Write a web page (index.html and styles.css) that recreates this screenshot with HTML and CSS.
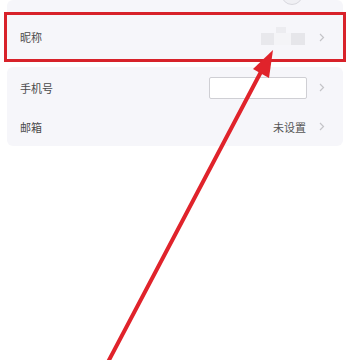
FILE: index.html
```html
<!DOCTYPE html>
<html lang="zh">
<head>
<meta charset="utf-8">
<link rel="stylesheet" href="styles.css">
</head>
<body>
<div class="page">
  <div class="card">
    <div class="avatar-row"><div class="avatar"></div></div>
    <div class="row">
      <span class="label">昵称</span>
      <span class="right">
        <svg class="mosaic" width="44" height="18" viewBox="0 0 44 18">
          <rect x="0" y="6" width="13" height="12" fill="#e8e8ec"/>
          <rect x="15" y="0" width="10" height="6" fill="#ececf0"/>
          <rect x="13" y="6" width="17" height="12" fill="#f4f4f7"/>
          <rect x="30" y="6" width="14" height="12" fill="#e6e6ea"/>
        </svg>
        <svg class="chev" width="6" height="9" viewBox="0 0 6 9"><path d="M1 1 L4.5 4.5 L1 8" fill="none" stroke="#c4c4c8" stroke-width="1.2"/></svg>
      </span>
    </div>
  </div>
  <div class="card second">
    <div class="row">
      <span class="label">手机号</span>
      <span class="right">
        <span class="phonebox"></span>
        <svg class="chev" width="6" height="9" viewBox="0 0 6 9"><path d="M1 1 L4.5 4.5 L1 8" fill="none" stroke="#c4c4c8" stroke-width="1.2"/></svg>
      </span>
    </div>
    <div class="row">
      <span class="label">邮箱</span>
      <span class="right">
        <span class="value">未设置</span>
        <svg class="chev" width="6" height="9" viewBox="0 0 6 9"><path d="M1 1 L4.5 4.5 L1 8" fill="none" stroke="#c4c4c8" stroke-width="1.2"/></svg>
      </span>
    </div>
  </div>
</div>
<div class="highlight"></div>
<svg class="arrow" width="352" height="360" viewBox="0 0 352 360">
  <line x1="108" y1="362" x2="263" y2="68" stroke="#e0232b" stroke-width="4" stroke-linecap="round"/>
  <polygon points="273,50 269,78 253,69" fill="#e0232b"/>
</svg>
</body>
</html>
```
FILE: styles.css
```css
html, body {
  margin: 0;
  padding: 0;
  background: #ffffff;
  width: 352px;
  height: 360px;
  overflow: hidden;
  font-family: "Noto Sans CJK SC", "Noto Sans", sans-serif;
}
body { position: relative; }
.page {
  padding: 0 9px 0 7px;
  display: flex;
  flex-direction: column;
  gap: 6px;
}
.card {
  background: #f6f6fa;
  border-radius: 6px;
  display: flex;
  flex-direction: column;
}
.avatar-row {
  height: 13px;
  overflow: hidden;
  display: flex;
  justify-content: flex-end;
  padding-right: 40px;
}
.avatar {
  width: 20px;
  height: 20px;
  margin-top: -17px;
  border-radius: 50%;
  border: 1px solid #d8d8de;
  background: #f0f0f4;
}
.row {
  height: 48px;
  display: flex;
  align-items: center;
  justify-content: space-between;
  padding: 0 18px 0 13px;
}
.second .row { height: 39px; }
.second .row:first-child { padding-top: 1px; }
.label {
  font-size: 11px;
  color: #4a4a4a;
}
.right {
  display: flex;
  align-items: center;
  gap: 12px;
}
.mosaic { display: block; margin-top: -2px; margin-right: 2px; }
.chev { display: block; }
.phonebox {
  width: 96px;
  height: 20px;
  background: #ffffff;
  border: 1px solid #cfcfd4;
  border-radius: 2px;
}
.value {
  font-size: 11px;
  color: #555;
  margin-right: 1px;
}
.highlight {
  position: absolute;
  left: 4px;
  top: 12px;
  width: 336px;
  height: 44px;
  border: 3px solid #d8222a;
}
.arrow {
  position: absolute;
  left: 0;
  top: 0;
}
```
